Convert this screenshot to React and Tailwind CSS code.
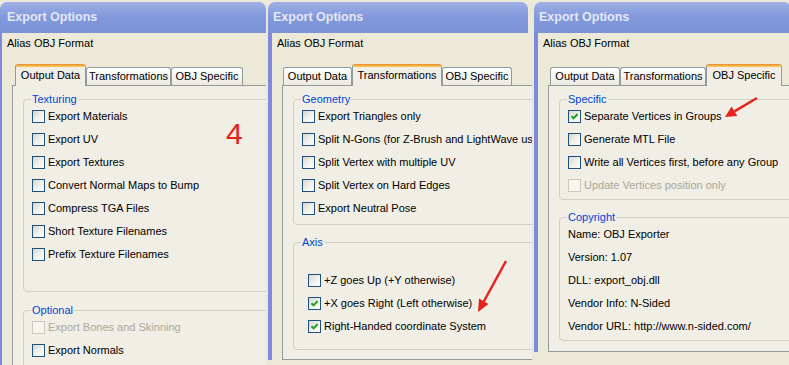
import React from "react";

function CheckBox({ checked, disabled }) {
  if (disabled)
    return <span className="block w-[13px] h-[13px] shrink-0 border border-[#cac8bb] bg-[#f6f5f0]" />;
  return (
    <span className="flex items-center justify-center w-[13px] h-[13px] shrink-0 border border-[#1c5180] bg-gradient-to-br from-[#d6d5cd] via-[#f0efea] to-white">
      {checked && (
        <svg width="9" height="9" viewBox="0 0 9 9">
          <path d="M1.5 4.2 L3.6 6.4 L7.6 2" stroke="#21a121" strokeWidth="2" fill="none" />
        </svg>
      )}
    </span>
  );
}

function Row({ label, checked, disabled }) {
  return (
    <div className="h-[23px] flex items-center gap-[3px] whitespace-nowrap">
      <CheckBox checked={checked} disabled={disabled} />
      <span className={disabled ? "text-[#aca899]" : "text-black"}>{label}</span>
    </div>
  );
}

function TextRow({ children }) {
  return <div className="h-[23px] flex items-center whitespace-nowrap text-black">{children}</div>;
}

function Group({ title, children, className = "" }) {
  return (
    <fieldset className={`border border-[#d0d0bf] rounded-[4px] pl-[8px] min-w-0 ${className}`}>
      <legend className="px-[1px] -ml-[1px] leading-[12px] text-[#0046d5]">{title}</legend>
      {children}
    </fieldset>
  );
}

function Tabs({ items, className }) {
  return (
    <div className={`flex items-end h-[21px] ${className}`}>
      {items.map((t) =>
        t.active ? (
          <div
            key={t.label}
            className={`relative z-10 h-[22px] -mb-[1px] ${t.w} flex flex-col bg-[#f0eee5] border-x border-[#919b9c] rounded-t-[3px] overflow-hidden`}
          >
            <div className="h-[3px] shrink-0 bg-gradient-to-b from-[#e68b2c] to-[#ffcf5a]" />
            <div className="flex-1 flex items-center justify-center pb-[2px] whitespace-nowrap">{t.label}</div>
          </div>
        ) : (
          <div
            key={t.label}
            className={`h-[18px] ${t.w} flex items-center justify-center border border-b-0 border-[#919b9c] rounded-t-[3px] bg-gradient-to-b from-white to-[#eceae0] whitespace-nowrap`}
          >
            {t.label}
          </div>
        )
      )}
    </div>
  );
}

function Panel({ width, height, stripe, titleCls, tabs, tabsCls, children }) {
  return (
    <div className={`${width} ${height} shrink-0 flex flex-col overflow-hidden`}>
      <div
        className={`mt-[2px] h-[31px] shrink-0 flex items-center rounded-t-[7px] bg-gradient-to-b from-[#9db0e6] via-[#8198da] to-[#7c93d6] text-[#e3e8f7] text-[12.5px] font-bold ${titleCls}`}
      >
        Export Options
      </div>
      <div className={`flex-1 flex flex-col ${stripe} border-[#7e89df] pl-[5px] pt-[4px] min-h-0`}>
        <div className="leading-[13px] whitespace-nowrap">Alias OBJ Format</div>
        <div className="ml-[5px] mt-[14px] w-[300px] flex-1 flex flex-col min-h-0">
          <Tabs items={tabs} className={tabsCls} />
          <div className="flex-1 border border-[#919b9c] bg-[#f0eee5] pt-[7px] pl-[10px] pr-[20px] flex flex-col">
            {children}
          </div>
        </div>
      </div>
    </div>
  );
}

export default function App() {
  return (
    <div className="relative w-[789px] h-[365px] overflow-hidden bg-[#ece9d8] text-[11px] text-black font-['Liberation_Sans',Arial,sans-serif] flex gap-[2px]">
      <Panel
        width="w-[266px]"
        height="h-[365px]"
        stripe="border-l-[2px]"
        titleCls="pl-[7px]"
        tabsCls="pl-[3px]"
        tabs={[
          { label: "Output Data", w: "w-[71px]", active: true },
          { label: "Transformations", w: "w-[85px]" },
          { label: "OBJ Specific", w: "w-[72px]" },
        ]}
      >
        <Group title="Texturing" className="pb-[25px]">
          <Row label="Export Materials" />
          <Row label="Export UV" />
          <Row label="Export Textures" />
          <Row label="Convert Normal Maps to Bump" />
          <Row label="Compress TGA Files" />
          <Row label="Short Texture Filenames" />
          <Row label="Prefix Texture Filenames" />
        </Group>
        <Group title="Optional" className="mt-[12px] pb-[10px]">
          <Row label="Export Bones and Skinning" disabled />
          <Row label="Export Normals" />
        </Group>
      </Panel>

      <Panel
        width="w-[264px]"
        height="h-[360px]"
        stripe="border-l-[4px]"
        titleCls="pl-[5px] mr-[4px]"
        tabsCls="pl-[1px]"
        tabs={[
          { label: "Output Data", w: "w-[69px]" },
          { label: "Transformations", w: "w-[90px]", active: true },
          { label: "OBJ Specific", w: "w-[70px]" },
        ]}
      >
        <Group title="Geometry" className="pb-[4px]">
          <Row label="Export Triangles only" />
          <Row label="Split N-Gons (for Z-Brush and LightWave users)" />
          <Row label="Split Vertex with multiple UV" />
          <Row label="Split Vertex on Hard Edges" />
          <Row label="Export Neutral Pose" />
        </Group>
        <Group title="Axis" className="mt-[11px] pt-[21px] pb-[11px]">
          <div className="pl-[6px]">
            <Row label="+Z goes Up (+Y otherwise)" />
            <Row label="+X goes Right (Left otherwise)" checked />
            <Row label="Right-Handed coordinate System" checked />
          </div>
        </Group>
      </Panel>

      <Panel
        width="w-[257px]"
        height="h-[352px]"
        stripe="border-l-[4px]"
        titleCls="pl-[5px]"
        tabsCls="pl-[2px]"
        tabs={[
          { label: "Output Data", w: "w-[70px]" },
          { label: "Transformations", w: "w-[86px]" },
          { label: "OBJ Specific", w: "w-[76px]", active: true },
        ]}
      >
        <Group title="Specific" className="pb-[2px]">
          <Row label="Separate Vertices in Groups" checked />
          <Row label="Generate MTL File" />
          <Row label="Write all Vertices first, before any Group" />
          <Row label="Update Vertices position only" disabled />
        </Group>
        <Group title="Copyright" className="mt-[11px] pb-[2px]">
          <TextRow>Name: OBJ Exporter</TextRow>
          <TextRow>Version: 1.07</TextRow>
          <TextRow>DLL: export_obj.dll</TextRow>
          <TextRow>Vendor Info: N-Sided</TextRow>
          <TextRow>Vendor URL: http://www.n-sided.com/</TextRow>
        </Group>
      </Panel>

      <div className="absolute left-[226px] top-[119px] text-[30px] leading-[30px] text-[#e8201c] pointer-events-none">4</div>
      <svg className="absolute left-0 top-0 pointer-events-none" width="789" height="365">
        <line x1="506" y1="261" x2="483.8" y2="301.5" stroke="#e8231d" strokeWidth="2.5" />
        <polygon points="478,312 488.5,304 479,298.6" fill="#e8231d" />
        <line x1="757" y1="98" x2="734.5" y2="111.4" stroke="#e8231d" strokeWidth="2.5" />
        <polygon points="725,117 737.3,116 731.6,106.6" fill="#e8231d" />
      </svg>
    </div>
  );
}
